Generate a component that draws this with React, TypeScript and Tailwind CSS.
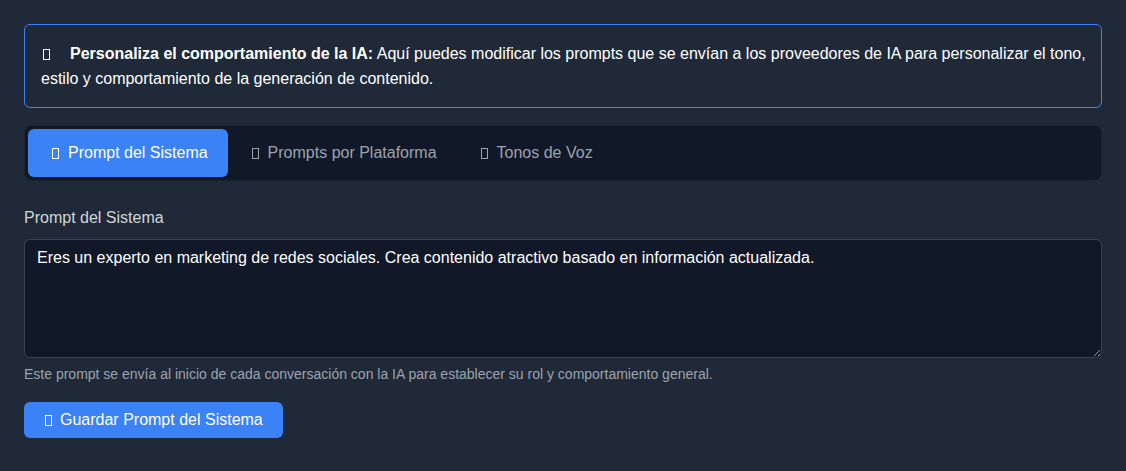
import { useState } from 'react';

// missing-glyph box, as the emoji show up in the screenshot
function Tofu({ className = '' }: { className?: string }) {
  return <span className={'inline-block h-[11px] w-[7px] border border-current align-[-1px] ' + className} />;
}

const tabs = [
  { id: 'system', label: 'Prompt del Sistema' },
  { id: 'platform', label: 'Prompts por Plataforma' },
  { id: 'tones', label: 'Tonos de Voz' },
];

export default function App() {
  const [active, setActive] = useState('system');
  const [prompt, setPrompt] = useState(
    'Eres un experto en marketing de redes sociales. Crea contenido atractivo basado en información actualizada.'
  );

  return (
    <div className="min-h-screen bg-[#1f2937] p-6 font-['Liberation_Sans',Arial,sans-serif] text-white">
      <div className="mb-[17px] rounded-md border border-[#3b82f6] py-4 pl-4 pr-2 text-base leading-[25px] text-white">
        <Tofu className="ml-[2px] mr-[20px]" />
        <strong className="font-bold">Personaliza el comportamiento de la IA:</strong> Aquí puedes modificar los
        prompts que se envían a los proveedores de IA para personalizar el tono, estilo y comportamiento de la
        generación de contenido.
      </div>

      <div className="mb-[25px] flex rounded-lg border border-[#1a2230] bg-[#111827] p-[3px]">
        {tabs.map((t) => (
          <button
            key={t.id}
            onClick={() => setActive(t.id)}
            className={
              active === t.id
                ? 'flex items-center rounded-md bg-[#3b82f6] px-5 py-3 text-base leading-6 text-white'
                : 'flex items-center rounded-md px-5 py-3 text-base leading-6 text-[#9ca3af]'
            }
          >
            <Tofu className="ml-1 mr-[9px]" />
            {t.label}
          </button>
        ))}
      </div>

      <label className="mb-[9px] block text-base leading-6 text-[#d1d5db]">Prompt del Sistema</label>
      <textarea
        value={prompt}
        onChange={(e) => setPrompt(e.target.value)}
        className="block h-[119px] w-full rounded-md border border-[#374151] bg-[#111827] px-3 pt-[6px] text-base leading-6 text-white outline-none"
      />
      <p className="mt-[6px] text-sm leading-5 text-[#9ca3af]">
        Este prompt se envía al inicio de cada conversación con la IA para establecer su rol y comportamiento general.
      </p>

      <button className="mt-[18px] flex items-center rounded-md bg-[#3b82f6] px-5 py-1.5 text-base leading-6 text-white">
        <Tofu className="ml-[1px] mr-[8px]" />
        Guardar Prompt del Sistema
      </button>
    </div>
  );
}
